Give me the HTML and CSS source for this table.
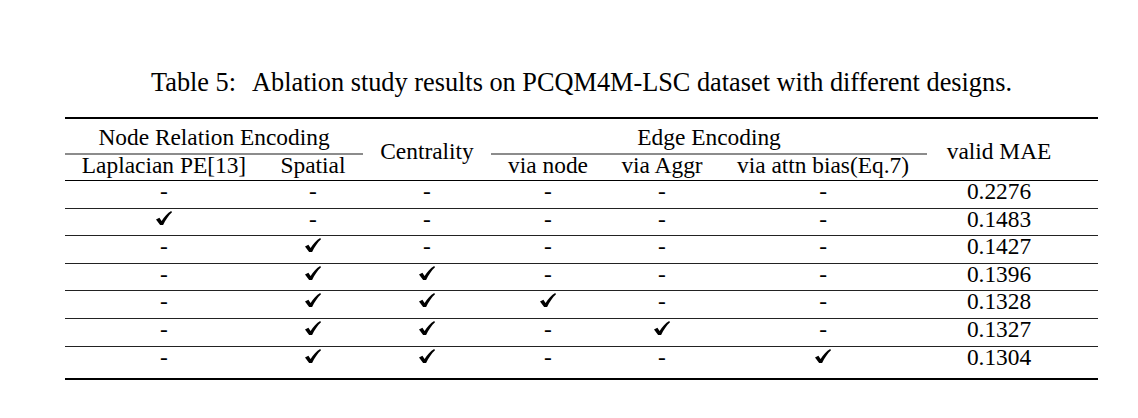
FILE: index.html
```html
<!DOCTYPE html>
<html lang="en">
  <head>
    <meta charset="UTF-8" />
    <meta name="viewport" content="width=device-width, initial-scale=1.0" />
    <title>Table 5: Ablation study</title>
    <link rel="stylesheet" href="styles.css">
  </head>
  <body>
    <!-- shared check mark glyph -->
    <svg class="defs" aria-hidden="true">
      <symbol id="check" viewBox="0 0 16 14">
        <path d="M0 8.6 L3.4 6.7 L5.6 9.9 C8.2 5.8 11.6 2.1 15.2 0 L16 1.2 C12.6 4.4 9.6 8.8 7.1 14 L4.1 14 Z" />
      </symbol>
    </svg>

    <div class="page">
      <p class="caption">
        <span class="label">Table 5:</span>Ablation study results on PCQM4M-LSC dataset with different designs.
      </p>

      <table class="results">
        <colgroup>
          <col class="col-lap" />
          <col class="col-spatial" />
          <col class="col-central" />
          <col class="col-node" />
          <col class="col-aggr" />
          <col class="col-attn" />
          <col class="col-mae" />
        </colgroup>
        <thead>
          <tr class="group-row">
            <th colspan="2" class="group">Node Relation Encoding</th>
            <th rowspan="2" class="span">Centrality</th>
            <th colspan="3" class="group">Edge Encoding</th>
            <th rowspan="2" class="span mae">valid MAE</th>
          </tr>
          <tr class="sub-row">
            <th>Laplacian PE[13]</th>
            <th>Spatial</th>
            <th>via node</th>
            <th>via Aggr</th>
            <th>via attn bias(Eq.7)</th>
          </tr>
        </thead>
        <tbody>
          <tr>
            <td>-</td><td>-</td><td>-</td><td>-</td><td>-</td><td>-</td>
            <td class="mae">0.2276</td>
          </tr>
          <tr>
            <td><svg class="check"><use href="#check" /></svg></td>
            <td>-</td><td>-</td><td>-</td><td>-</td><td>-</td>
            <td class="mae">0.1483</td>
          </tr>
          <tr>
            <td>-</td>
            <td><svg class="check"><use href="#check" /></svg></td>
            <td>-</td><td>-</td><td>-</td><td>-</td>
            <td class="mae">0.1427</td>
          </tr>
          <tr>
            <td>-</td>
            <td><svg class="check"><use href="#check" /></svg></td>
            <td><svg class="check"><use href="#check" /></svg></td>
            <td>-</td><td>-</td><td>-</td>
            <td class="mae">0.1396</td>
          </tr>
          <tr>
            <td>-</td>
            <td><svg class="check"><use href="#check" /></svg></td>
            <td><svg class="check"><use href="#check" /></svg></td>
            <td><svg class="check"><use href="#check" /></svg></td>
            <td>-</td><td>-</td>
            <td class="mae">0.1328</td>
          </tr>
          <tr>
            <td>-</td>
            <td><svg class="check"><use href="#check" /></svg></td>
            <td><svg class="check"><use href="#check" /></svg></td>
            <td>-</td>
            <td><svg class="check"><use href="#check" /></svg></td>
            <td>-</td>
            <td class="mae">0.1327</td>
          </tr>
          <tr>
            <td>-</td>
            <td><svg class="check"><use href="#check" /></svg></td>
            <td><svg class="check"><use href="#check" /></svg></td>
            <td>-</td><td>-</td>
            <td><svg class="check"><use href="#check" /></svg></td>
            <td class="mae">0.1304</td>
          </tr>
        </tbody>
      </table>
    </div>
  </body>
</html>
```

FILE: styles.css
```css
/* Global styles */
* {
  box-sizing: border-box;
  margin: 0;
  padding: 0;
}

body {
  background: #fff;
  color: #000;
  font-family: "Liberation Serif", "Times New Roman", serif;
}

.defs {
  display: none;
}

.page {
  width: 1033px;
  margin-left: 65px;
  padding-top: 68px;
}

.caption {
  font-size: 26.3px;
  line-height: 30px;
  text-align: center;
}

.caption .label {
  margin-right: 16px;
}

/* Table */
.results {
  width: 1033px;
  margin-top: 19px;
  table-layout: fixed;
  border-collapse: separate;
  border-spacing: 0;
  border-top: 2px solid #000;
  border-bottom: 2px solid #000;
  font-size: 23.4px;
  line-height: 21px;
}

.col-lap { width: 198px; }
.col-spatial { width: 100px; }
.col-central { width: 128px; }
.col-node { width: 114px; }
.col-aggr { width: 114px; }
.col-attn { width: 208px; }
.col-mae { width: 171px; }

.results th,
.results td {
  font-weight: normal;
  text-align: center;
  white-space: nowrap;
  padding: 0 0 5.6px;
  border-bottom: 1px solid #222;
}

.group-row th {
  padding: 8px 0 5px;
  border-bottom: none;
}

.group-row .group {
  border-bottom: 2px solid #8c8c8c;
}

.group-row .span {
  padding-top: 4px;
  padding-bottom: 0;
  vertical-align: middle;
  border-bottom: 1px solid #000;
}

.sub-row th {
  padding: 0 0 4px;
  border-bottom: 1px solid #000;
}

.results tbody tr:last-child td {
  border-bottom: none;
  padding-bottom: 10.7px;
}

.results .mae {
  padding-right: 27px;
}

.check {
  width: 16px;
  height: 14px;
  vertical-align: 2px;
  fill: #000;
}
```
